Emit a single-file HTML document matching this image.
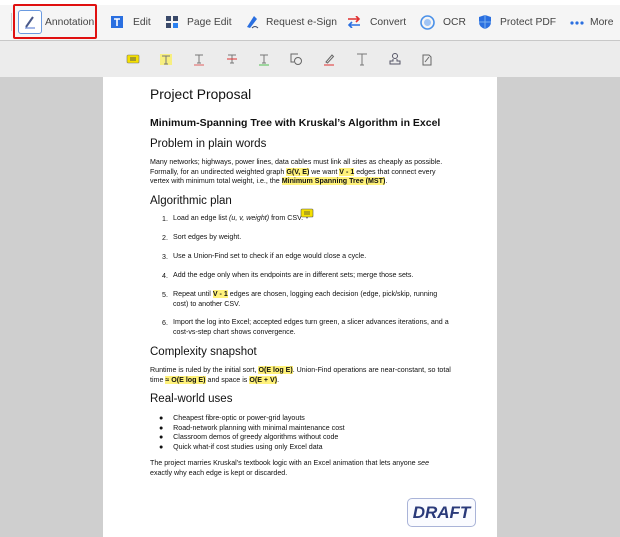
<!DOCTYPE html>
<html><head><meta charset="utf-8"><style>
*{margin:0;padding:0;box-sizing:border-box}
body{width:620px;height:530px;overflow:hidden;background:#cfcfcf;font-family:"Liberation Sans",sans-serif;position:relative}
.tb{position:absolute;left:0;top:0;width:620px;height:41px;background:#f5f5f5;border-bottom:1px solid #c8c8c8}
.tb .top{position:absolute;left:0;top:0;width:620px;height:5px;background:#fff}
.tool{position:absolute;top:17px;font-size:10.3px;color:#444;white-space:nowrap}
.st{position:absolute;left:0;top:41px;width:620px;height:36px;background:#ececec}
.ic{position:absolute;top:11px}
.page{position:absolute;left:103px;top:77px;width:394px;height:460px;background:#fff}
.a{position:absolute;left:150px;color:#111;white-space:nowrap}
.b{font-size:7.1px;line-height:9.6px}
.h2{font-size:11.5px}
.hl{background:#fff27a;font-weight:bold}
.n{position:absolute;left:162px;font-size:7.1px;color:#111}
.li{position:absolute;left:173px;font-size:7.1px;line-height:9.6px;color:#111;white-space:nowrap}
</style></head><body>
<div class="tb"><div class="top"></div>
<div style="position:absolute;left:11px;top:13px;width:1px;height:18px;background:#ccc"></div>
<div style="position:absolute;left:18px;top:10px;width:24px;height:24px;border:1px solid #6a9ae0;border-radius:3px;background:#fff"></div>
<svg style="position:absolute;left:22px;top:14px" width="16" height="16"><path d="M4 13 L11 3" stroke="#4a5a8a" stroke-width="2"/><path d="M3 14h10" stroke="#4a70d0" stroke-width="1"/></svg>
<div class="tool" style="left:45px">Annotation</div>
<div style="position:absolute;left:13px;top:4px;width:84px;height:35px;border:2px solid #e01010;border-radius:2px"></div>
<svg style="position:absolute;left:110px;top:15px" width="14" height="14"><rect x="1" y="1" width="12" height="12" fill="#2a6fe0"/><path d="M4 4h6M7 4v7" stroke="#fff" stroke-width="1.6"/></svg>
<div class="tool" style="left:133px">Edit</div>
<svg style="position:absolute;left:166px;top:16px" width="12" height="12"><rect x="0" y="0" width="5" height="5" fill="#3a4a6a"/><rect x="7" y="0" width="5" height="5" fill="#3a4a6a"/><rect x="0" y="7" width="5" height="5" fill="#3a4a6a"/><rect x="7" y="7" width="5" height="5" fill="#2a80f0"/></svg>
<div class="tool" style="left:187px">Page Edit</div>
<svg style="position:absolute;left:245px;top:14px" width="14" height="16"><path d="M2 13 L9 2 L12 5 L5 14Z" fill="#2a6fe0"/><path d="M7 14 q3 -3 6 0" stroke="#3a4a6a" fill="none"/></svg>
<div class="tool" style="left:266px">Request e-Sign</div>
<svg style="position:absolute;left:347px;top:16px" width="14" height="12"><path d="M1 3h11M9 0l3 3-3 3" stroke="#e03030" stroke-width="1.6" fill="none"/><path d="M13 9H2M5 6l-3 3 3 3" stroke="#2a6fe0" stroke-width="1.6" fill="none"/></svg>
<div class="tool" style="left:370px">Convert</div>
<svg style="position:absolute;left:420px;top:15px" width="15" height="15"><circle cx="7.5" cy="7.5" r="6.5" fill="none" stroke="#4a90e8" stroke-width="1.6"/><circle cx="7.5" cy="7.5" r="3.5" fill="#a0c4f4"/></svg>
<div class="tool" style="left:443px">OCR</div>
<svg style="position:absolute;left:478px;top:14px" width="14" height="16"><path d="M7 1 L13 3 V8 Q13 13 7 15 Q1 13 1 8 V3Z" fill="#2a6fe0"/><path d="M7 1V15M1 8H13" stroke="#7ab0f0" stroke-width="1"/></svg>
<div class="tool" style="left:500px">Protect PDF</div>
<svg style="position:absolute;left:570px;top:21px" width="14" height="4"><circle cx="2" cy="2" r="1.6" fill="#2a6fe0"/><circle cx="7" cy="2" r="1.6" fill="#2a6fe0"/><circle cx="12" cy="2" r="1.6" fill="#2a6fe0"/></svg>
<div class="tool" style="left:590px">More</div>
</div>
<div class="st">
<svg class="ic" style="left:126px" width="14" height="14"><rect x="1" y="3" width="12" height="8" rx="1" fill="#f5e000" stroke="#777" stroke-width=".6"/><path d="M4 6h6M4 8h6" stroke="#555"/></svg>
<svg class="ic" style="left:159px" width="14" height="14"><rect x="1" y="2" width="12" height="11" fill="#f7ef80"/><path d="M3 4h8M7 4v8M5 12h4" stroke="#777"/></svg>
<svg class="ic" style="left:192px" width="14" height="14"><path d="M3 3h8M7 3v8M5 11h4" stroke="#777"/><path d="M2 13h10" stroke="#e06060"/></svg>
<svg class="ic" style="left:225px" width="14" height="14"><path d="M3 3h8M7 3v8M5 11h4" stroke="#777"/><path d="M2 7h10" stroke="#e03030"/></svg>
<svg class="ic" style="left:257px" width="14" height="14"><path d="M3 3h8M7 3v8M5 11h4" stroke="#777"/><path d="M2 13h10" stroke="#50c050"/></svg>
<svg class="ic" style="left:289px" width="14" height="14"><path d="M9 2H2v8h3" stroke="#666" fill="none"/><circle cx="9" cy="9" r="3.5" stroke="#666" fill="none"/></svg>
<svg class="ic" style="left:322px" width="14" height="14"><path d="M4 10L10 3l1.5 1.5L5.5 11Z" stroke="#666" fill="none"/><path d="M2 13h10" stroke="#e03030"/></svg>
<svg class="ic" style="left:355px" width="14" height="14"><path d="M2 2h10M7 2v11M5 13h4" stroke="#777"/></svg>
<svg class="ic" style="left:388px" width="14" height="14"><circle cx="7" cy="4" r="2.5" stroke="#556" fill="none"/><path d="M5 7v2H2v3h10V9H9V7" stroke="#556" fill="none"/></svg>
<svg class="ic" style="left:420px" width="14" height="14"><path d="M3 3h6l2 2v8H3Z" stroke="#666" fill="none"/><path d="M5 10l4-5" stroke="#666"/></svg>
</div>
<div class="page"></div>
<div class="a" style="top:87px;font-size:13.8px">Project Proposal</div>
<div class="a" style="top:117px;font-size:10.5px;font-weight:bold">Minimum-Spanning Tree with Kruskal’s Algorithm in Excel</div>
<div class="a h2" style="top:138px">Problem in plain words</div>
<div class="a b" style="top:158px">Many networks; highways, power lines, data cables must link all sites as cheaply as possible.<br>Formally, for an undirected weighted graph <span class="hl">G(V, E)</span> we want <span class="hl">V - 1</span> edges that connect every<br>vertex with minimum total weight, i.e., the <span class="hl">Minimum Spanning Tree (MST)</span>.</div>
<div class="a h2" style="top:195px">Algorithmic plan</div>
<div class="n" style="top:215px">1.</div><div class="li" style="top:214px">Load an edge list <i>(u, v, weight)</i> from CSV.</div>
<svg style="position:absolute;left:300px;top:208px" width="14" height="12"><rect x="1" y="1" width="12" height="8" rx="1" fill="#f5e000" stroke="#555" stroke-width=".6"/><path d="M4 4h6M4 6h6" stroke="#444" stroke-width=".8"/><path d="M6 9l1 2 1-2" fill="#555"/></svg>
<div class="n" style="top:234px">2.</div><div class="li" style="top:233px">Sort edges by weight.</div>
<div class="n" style="top:253px">3.</div><div class="li" style="top:252px">Use a Union-Find set to check if an edge would close a cycle.</div>
<div class="n" style="top:272px">4.</div><div class="li" style="top:271px">Add the edge only when its endpoints are in different sets; merge those sets.</div>
<div class="n" style="top:291px">5.</div><div class="li" style="top:290px">Repeat until <span class="hl">V - 1</span> edges are chosen, logging each decision (edge, pick/skip, running<br>cost) to another CSV.</div>
<div class="n" style="top:319px">6.</div><div class="li" style="top:318px">Import the log into Excel; accepted edges turn green, a slicer advances iterations, and a<br>cost-vs-step chart shows convergence.</div>
<div class="a h2" style="top:346px">Complexity snapshot</div>
<div class="a b" style="top:366px">Runtime is ruled by the initial sort, <span class="hl">O(E log E)</span>. Union-Find operations are near-constant, so total<br>time <span class="hl">≈ O(E log E)</span> and space is <span class="hl">O(E + V)</span>.</div>
<div class="a h2" style="top:393px">Real-world uses</div>
<div class="li" style="top:414px;left:159px">●&nbsp;&nbsp;&nbsp;&nbsp;&nbsp;Cheapest fibre-optic or power-grid layouts<br>●&nbsp;&nbsp;&nbsp;&nbsp;&nbsp;Road-network planning with minimal maintenance cost<br>●&nbsp;&nbsp;&nbsp;&nbsp;&nbsp;Classroom demos of greedy algorithms without code<br>●&nbsp;&nbsp;&nbsp;&nbsp;&nbsp;Quick what-if cost studies using only Excel data</div>
<div class="a b" style="top:459px">The project marries Kruskal’s textbook logic with an Excel animation that lets anyone <i>see</i><br>exactly why each edge is kept or discarded.</div>
<div style="position:absolute;left:407px;top:498px;width:69px;height:29px;border:1px solid #aab4d8;border-radius:5px;background:#fafbff;color:#2a3a7a;font-weight:bold;font-style:italic;font-size:17px;text-align:center;line-height:28px">DRAFT</div>
</body></html>
